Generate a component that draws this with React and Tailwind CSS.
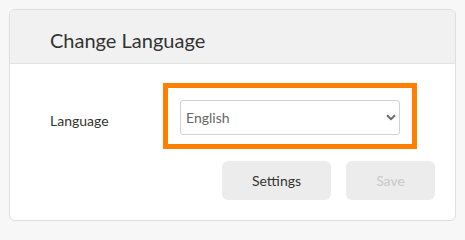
export default function App() {
  return (
    <div className="min-h-screen bg-[#f7f7f7] pt-[9px] pl-[9px] font-['Lato','Liberation_Sans',sans-serif]">
      <div className="w-[447px] h-[212px] rounded-md border border-[#dedede] bg-white overflow-hidden">
        {/* HEADER */}
        <div className="h-[54px] border-b border-[#e2e2e2] bg-[#f1f1f1] pl-10 pt-[18px]">
          <h2 className="text-[20px] leading-6 text-[#333]">Change Language</h2>
        </div>

        {/* BODY */}
        <div className="flex items-start pt-[19px]">
          <label className="ml-10 w-[113px] mt-[28px] text-[14px] leading-5 text-[#333]">
            Language
          </label>

          <div className="w-[254px] border-[5px] border-[#ff7f00] px-3 pt-3 pb-[9px]">
            <div className="h-[35px] flex items-center justify-between rounded-[3px] border border-[#d2d2d2] bg-white pl-[5px] pr-[3px]">
              <span className="text-[14px] leading-5 text-[#666]">English</span>
              <svg width="10" height="7" viewBox="0 0 10 7">
                <polyline
                  points="1,1.2 5,5.2 9,1.2"
                  fill="none"
                  stroke="#6a6a6a"
                  strokeWidth="2"
                />
              </svg>
            </div>
          </div>
        </div>

        {/* FOOTER */}
        <div className="flex justify-end gap-[15px] pr-5 mt-3">
          <button className="w-[109px] h-[39px] rounded-md bg-[#ececec] text-[14px] text-[#333]">
            Settings
          </button>
          <button className="w-[89px] h-[39px] rounded-md bg-[#ececec] text-[14px] text-[#c8c8c8]">
            Save
          </button>
        </div>
      </div>
    </div>
  );
}
